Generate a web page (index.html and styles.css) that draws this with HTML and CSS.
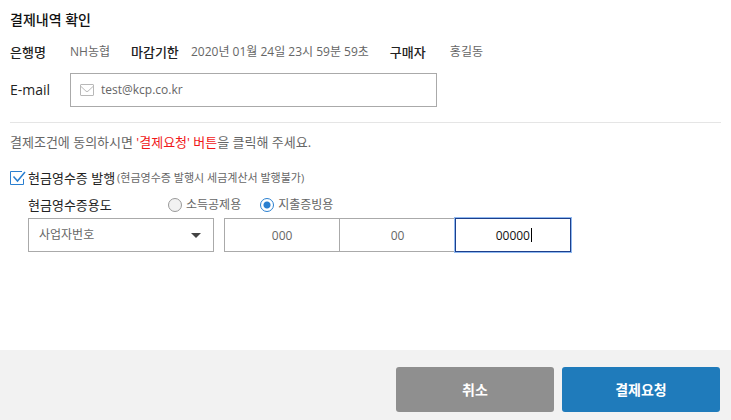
FILE: index.html
```html
<!DOCTYPE html>
<html lang="ko">
<head>
  <meta charset="UTF-8">
  <meta name="viewport" content="width=device-width, initial-scale=1.0">
  <title>결제내역 확인</title>
  <link rel="stylesheet" href="styles.css">
</head>
<body>
  <form class="page" id="payForm">
    <main class="content">
      <h1>결제내역 확인</h1>
      <dl class="info">
        <div class="info-item"><dt>은행명</dt><dd>NH농협</dd></div>
        <div class="info-item"><dt>마감기한</dt><dd>2020년 01월 24일 23시 59분 59초</dd></div>
        <div class="info-item"><dt>구매자</dt><dd>홍길동</dd></div>
      </dl>
      <div class="email-row">
        <label for="email">E-mail</label>
        <div class="email-box">
          <svg class="mail-icon" viewBox="0 0 14 12" width="14" height="12" fill="none" stroke="#b8b8b8" aria-hidden="true">
            <rect x="0.5" y="0.5" width="13" height="11" rx="0.5"/>
            <path d="M1 2.5L6 7.2Q7 8 8 7.2L13 2.5"/>
          </svg>
          <input type="email" id="email" name="email" value="test@kcp.co.kr">
        </div>
      </div>

      <p class="notice">결제조건에 동의하시면 <em>'결제요청' 버튼</em>을 클릭해 주세요.</p>

      <div class="receipt-row">
        <input type="checkbox" class="check" id="receipt" name="receipt" checked>
        <svg class="check-mark" viewBox="0 0 16 16" width="16" height="16" fill="none" aria-hidden="true">
          <path d="M12 1.5H0.5V14.5H13.5V9" stroke="#2a7fd0"/>
          <path d="M3.5 6.5L7.5 11L15 2" stroke="#2a7fd0" stroke-width="1.5"/>
        </svg>
        <label for="receipt">현금영수증 발행</label>
        <span class="receipt-note">(현금영수증 발행시 세금계산서 발행불가)</span>
      </div>

      <div class="receipt-detail">
        <div class="usage" role="radiogroup" aria-labelledby="usageTitle">
          <span class="usage-title" id="usageTitle">현금영수증용도</span>
          <label class="radio"><input type="radio" name="usage" value="income">소득공제용</label>
          <label class="radio"><input type="radio" name="usage" value="expense" checked>지출증빙용</label>
        </div>
        <div class="number-row">
          <select class="number-type" name="numberType" aria-label="번호 종류">
            <option>사업자번호</option>
          </select>
          <div class="numbers">
            <div class="number"><input type="text" name="num1" value="000" maxlength="3" aria-label="사업자번호 1"></div>
            <div class="number"><input type="text" name="num2" value="00" maxlength="2" aria-label="사업자번호 2"></div>
            <div class="number number-last"><input type="text" id="num3" name="num3" value="00000" maxlength="5" aria-label="사업자번호 3"></div>
          </div>
        </div>
      </div>
    </main>

    <footer class="footer">
      <button type="button" class="btn btn-cancel">취소</button>
      <button type="submit" class="btn btn-pay">결제요청</button>
    </footer>
  </form>

  <script>
    // Start with the cursor after the last digit
    const num3 = document.getElementById('num3');
    num3.focus();
    num3.setSelectionRange(num3.value.length, num3.value.length);
  </script>
</body>
</html>
```
FILE: styles.css
```css
* {
  box-sizing: border-box;
}
body {
  margin: 0;
  background-color: #fff;
  color: #666;
  font-family: "Open Sans", "Noto Sans CJK KR", sans-serif;
  font-size: 12px;
  line-height: 18px;
}
input,
select,
button {
  font: inherit;
  color: inherit;
}
.page {
  display: flex;
  flex-direction: column;
  min-height: 100vh;
}
.content {
  flex: 1;
  padding: 11px 10px 20px;
}
h1 {
  margin: 0;
  color: #111;
  font-size: 14px;
  font-weight: 500;
  line-height: 18px;
}
.info {
  display: flex;
  flex-wrap: wrap;
  gap: 4px 21px;
  margin: 14px 0 12px;
}
.info-item {
  display: flex;
}
dt {
  min-width: 60px;
  color: #222;
  font-weight: 500;
  font-size: 13px;
}
dd {
  margin: 0;
}
.email-row {
  display: flex;
  align-items: center;
}
.email-row label {
  width: 60px;
  color: #222;
  font-size: 14px;
}
.email-box {
  display: flex;
  align-items: center;
  flex: 1;
  max-width: 367px;
  height: 34px;
  padding: 0 9px;
  border: 1px solid #aaa;
}
.email-box input {
  flex: 1;
  min-width: 0;
  margin-left: 7px;
  padding: 0;
  border: 0;
  outline: 0;
  background: none;
}
.notice {
  margin: 15px 0 18px;
  padding-top: 10px;
  border-top: 1px solid #e5e5e5;
  font-size: 13px;
}
.notice em {
  color: #f01818;
  font-style: normal;
}
.receipt-row {
  display: flex;
  align-items: center;
  position: relative;
}
.receipt-row label {
  margin-left: 2px;
  color: #222;
  font-size: 13px;
}
.check {
  position: absolute;
  left: 0;
  width: 16px;
  height: 16px;
  margin: 0;
  opacity: 0;
}
.check:not(:checked) + .check-mark path:last-child {
  display: none;
}
.receipt-note {
  margin-left: 2px;
  font-size: 11px;
}
.receipt-detail {
  padding: 9px 0 0 18px;
}
.usage {
  display: flex;
  align-items: center;
}
.usage-title {
  width: 140px;
  color: #222;
  font-size: 13px;
}
.radio {
  display: flex;
  align-items: center;
  gap: 4px;
  margin-right: 19px;
}
.radio input {
  appearance: none;
  width: 14px;
  height: 14px;
  margin: 0;
  border: 1px solid #999;
  border-radius: 50%;
  background-color: #f2f2f2;
}
.radio input:checked {
  border-color: #2a7fd0;
  background: #fff radial-gradient(circle, #2a7fd0 3px, transparent 4px);
}
.number-row {
  display: flex;
  gap: 10px;
  margin-top: 4px;
}
.number-type {
  appearance: none;
  width: 186px;
  height: 34px;
  padding: 0 10px;
  border: 1px solid #aaa;
  border-radius: 0;
  background: #fff url("data:image/svg+xml,%3Csvg xmlns='http://www.w3.org/2000/svg' width='10' height='5'%3E%3Cpath d='M0 0h10L5 5z' fill='%23444'/%3E%3C/svg%3E") no-repeat right 12px center;
}
.numbers {
  display: flex;
  flex: 1;
  max-width: 347px;
}
.number {
  flex: 1;
  min-width: 0;
  position: relative;
}
.number + .number {
  margin-left: -1px;
}
.number input {
  display: block;
  width: 100%;
  height: 34px;
  padding: 0 8px;
  border: 1px solid #aaa;
  border-radius: 0;
  outline: 0;
  text-align: center;
}
.number:focus-within {
  z-index: 1;
}
.number input:focus {
  border-color: #1d3f8c;
  box-shadow: 0 0 0 1px #8fb9f2;
  color: #111;
}
.number-last input {
  caret-color: transparent;
}
.number-last:focus-within::after {
  content: "";
  position: absolute;
  top: 10px;
  left: calc(50% + 18px);
  width: 1px;
  height: 14px;
  background-color: #000;
}
.footer {
  display: flex;
  justify-content: flex-end;
  gap: 8px;
  padding: 17px 11px 8px;
  background-color: #f2f2f2;
}
.btn {
  width: 158px;
  height: 45px;
  padding: 0;
  border: 0;
  border-radius: 3px;
  color: #fff;
  font-size: 14px;
  font-weight: 700;
  cursor: pointer;
}
.btn-cancel {
  background-color: #8f8f8f;
}
.btn-pay {
  background-color: #1f7bbb;
}
```
